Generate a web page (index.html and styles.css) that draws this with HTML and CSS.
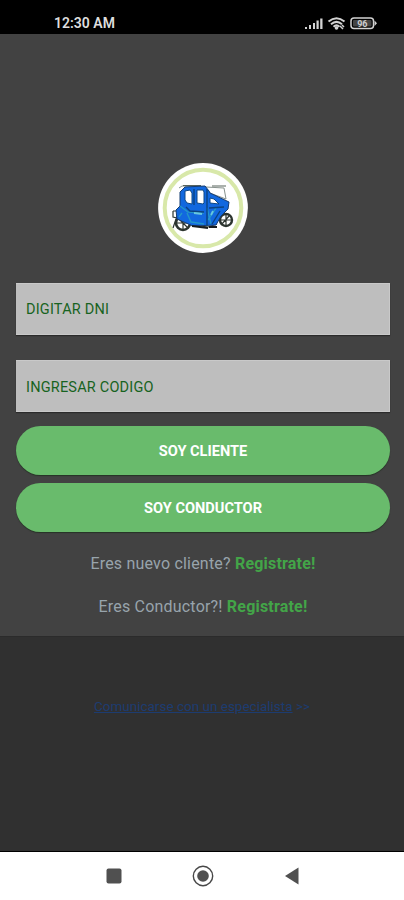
FILE: index.html
```html
<!DOCTYPE html>
<html lang="es">
<head>
<meta charset="utf-8">
<title>Iniciar sesión</title>
<link rel="stylesheet" href="styles.css">
</head>
<body>
<header class="status">
  <span class="time">12:30 AM</span>
  <svg class="status-icons" width="76" height="18" viewBox="0 0 76 18">
    <g fill="#d2d2d2">
      <path d="M1 11h2v2H1zM5 9h2v4H5zM9 7h2v6H9zM12.500 4.500h2.200V13h-2.200zM16.200 2.500h2.300V13h-2.300z"/>
      <circle cx="32.500" cy="12" r="1.800"/>
    </g>
    <g fill="none" stroke="#d2d2d2" stroke-width="2">
      <path d="M24.500 5.500Q32.500-1 40.500 5.500M27 8.200Q32.500 3.600 38 8.200M29.500 10.700Q32.500 8 35.500 10.700"/>
      <path d="M36 10l3 3M38 9l2 2" stroke-width="1.500"/>
      <rect x="47" y="2" width="22.500" height="10.500" rx="3" stroke-width="1.500"/>
    </g>
    <path d="M70.500 4.500l2.500 2.700-2.500 2.800z" fill="#d2d2d2"/>
    <rect x="49" y="4" width="18.500" height="6.500" rx="1" fill="#444"/>
    <text x="58.300" y="10.500" text-anchor="middle" class="battery">96</text>
  </svg>
</header>
<main class="panel">
  <svg class="logo" width="90" height="90" viewBox="0 0 90 90">
    <circle cx="45" cy="45" r="44.900" fill="#fff"/>
    <circle cx="45" cy="45" r="38.300" fill="none" stroke="#d8e8a9" stroke-width="4"/>
    <path d="M21 25l3-2 24 1 18 1 2 11-19-7" fill="#fff" stroke="#87918c" stroke-width="1"/>
    <path d="M25 22.500h18M54 23h14" stroke="#59645d" stroke-width="1.100"/>
    <g fill="none" stroke="#2c342f">
      <circle cx="25" cy="60" r="7" stroke-width="2.600"/>
      <circle cx="68" cy="57" r="6" stroke-width="2.400"/>
      <path d="M15 48h8M15 48v6l4 1M15 65l4-12 7-1M18 60h14M25 53v13M20 55l10 10M62 57h12M68 50v13M63 62l9-10M34 62l16 2 9-3" stroke-width="1.200"/>
    </g>
    <path d="M22 29l5-5 20-1 4 5 1 2 19 9-1 7-7 7-5 9-23 1-16-7-1-9 4-4z" fill="#1268df" stroke="#153c71" stroke-width="1"/>
    <path d="M27 28l5-1 2 3v11l-5-1-2-3zM39 27h6l1 2v11l-1 1-6-1zM52 35l4 1 5 5-9-1z" fill="#fff" stroke="#0c4785"/>
    <path d="M22 43l8 6 16 1M29 50l4 9 13 2M49 45l4 16M58 45l-8 12M24 50l-3 4" fill="none" stroke="#2396c8" stroke-width="1.400"/>
    <path d="M49 26v37M28 44l4 4 14 1M51 45l15-1M54 61l8-13M36 26v16" fill="none" stroke="#0b4381" stroke-width="1.400"/>
    <path d="M36 50l8 1M53 52l2-4" stroke="#68c7de" stroke-width="1.800"/>
    <path d="M34 63l16 2M51 64h8" stroke="#171d20" stroke-width="1.800"/>
  </svg>
  <form class="form">
    <div class="field"><span>DIGITAR DNI</span></div>
    <div class="field"><span>INGRESAR CODIGO</span></div>
    <button class="button" type="button">SOY CLIENTE</button>
    <button class="button" type="button">SOY CONDUCTOR</button>
  </form>
  <p class="signup">Eres nuevo cliente? <b>Registrate!</b></p>
  <p class="signup">Eres Conductor?! <b>Registrate!</b></p>
</main>
<section class="support"><a class="contact"><u>Comunicarse con un especialista</u> &gt;&gt;</a></section>
<nav class="navbar">
  <svg width="24" height="24" viewBox="0 0 24 24"><rect x="4.500" y="4.500" width="15" height="15" rx="2" fill="#505050"/></svg>
  <svg width="24" height="24" viewBox="0 0 24 24"><circle cx="12" cy="12" r="9.700" fill="none" stroke="#484848" stroke-width="1.400"/><circle cx="12" cy="12" r="5.800" fill="#505050"/></svg>
  <svg width="24" height="24" viewBox="0 0 24 24"><path d="M5 12L18.500 3.500v17z" fill="#505050"/></svg>
</nav>
</body>
</html>
```
FILE: styles.css
```css
* { box-sizing: border-box; }
body {
  margin: 0;
  width: 404px;
  height: 900px;
  display: flex;
  flex-direction: column;
  overflow: hidden;
  background: #303030;
  font-family: Roboto, sans-serif;
}
.status {
  height: 34px;
  flex: none;
  display: flex;
  justify-content: space-between;
  padding: 14px 24px 0 54px;
  background: #000;
  color: #dedede;
}
.time { font-size: 14px; line-height: 18px; font-weight: 600; }
.status-icons { margin-top: 1.500px; }
.battery { font: bold 9px Roboto, sans-serif; fill: #ccc; }
.panel {
  height: 603px;
  flex: none;
  display: flex;
  flex-direction: column;
  align-items: center;
  padding: 128.500px 14px 0 16px;
  background: #424242;
  border-bottom: 1px solid #2b2b2b;
}
.logo { flex: none; display: block; margin-right: 1px; }
.form { width: 100%; margin: 30px 0 20px; display: flex; flex-direction: column; }
.field {
  height: 52px;
  display: flex;
  align-items: center;
  padding: 2px 10px 0;
  margin-bottom: 25.500px;
  background: #bebebe;
  border: 1px solid #c9c9c9;
  border-width: 1px 1px 1px 0;
  box-shadow: 0 1px 1px #2b2b2b;
  color: #176321;
  font-size: 14.500px;
  letter-spacing: .2px;
}
.field + .field { margin-bottom: 14px; }
.button {
  height: 48.500px;
  margin: 0 0 8.500px;
  padding: 2px 0 0;
  border: 0;
  border-radius: 25px;
  background: #69bb6c;
  box-shadow: 0 1px 1px #263326;
  color: #fff;
  font: bold 14.600px Roboto, sans-serif;
}
.button:last-child { margin-bottom: 0; }
.signup { margin: 0 0 19px; font-size: 16px; line-height: 24px; letter-spacing: .2px; color: #98a4ac; white-space: nowrap; }
.signup b { color: #43a548; }
.support { flex: 1; text-align: center; padding-top: 59px; }
.contact { font-size: 13.500px; line-height: 20px; color: #1d3c70; }
.navbar {
  height: 49px;
  flex: none;
  display: flex;
  justify-content: center;
  align-items: center;
  gap: 65px;
  padding-left: 1px;
  border-top: 1px solid #000;
  background: #fff;
}
```
